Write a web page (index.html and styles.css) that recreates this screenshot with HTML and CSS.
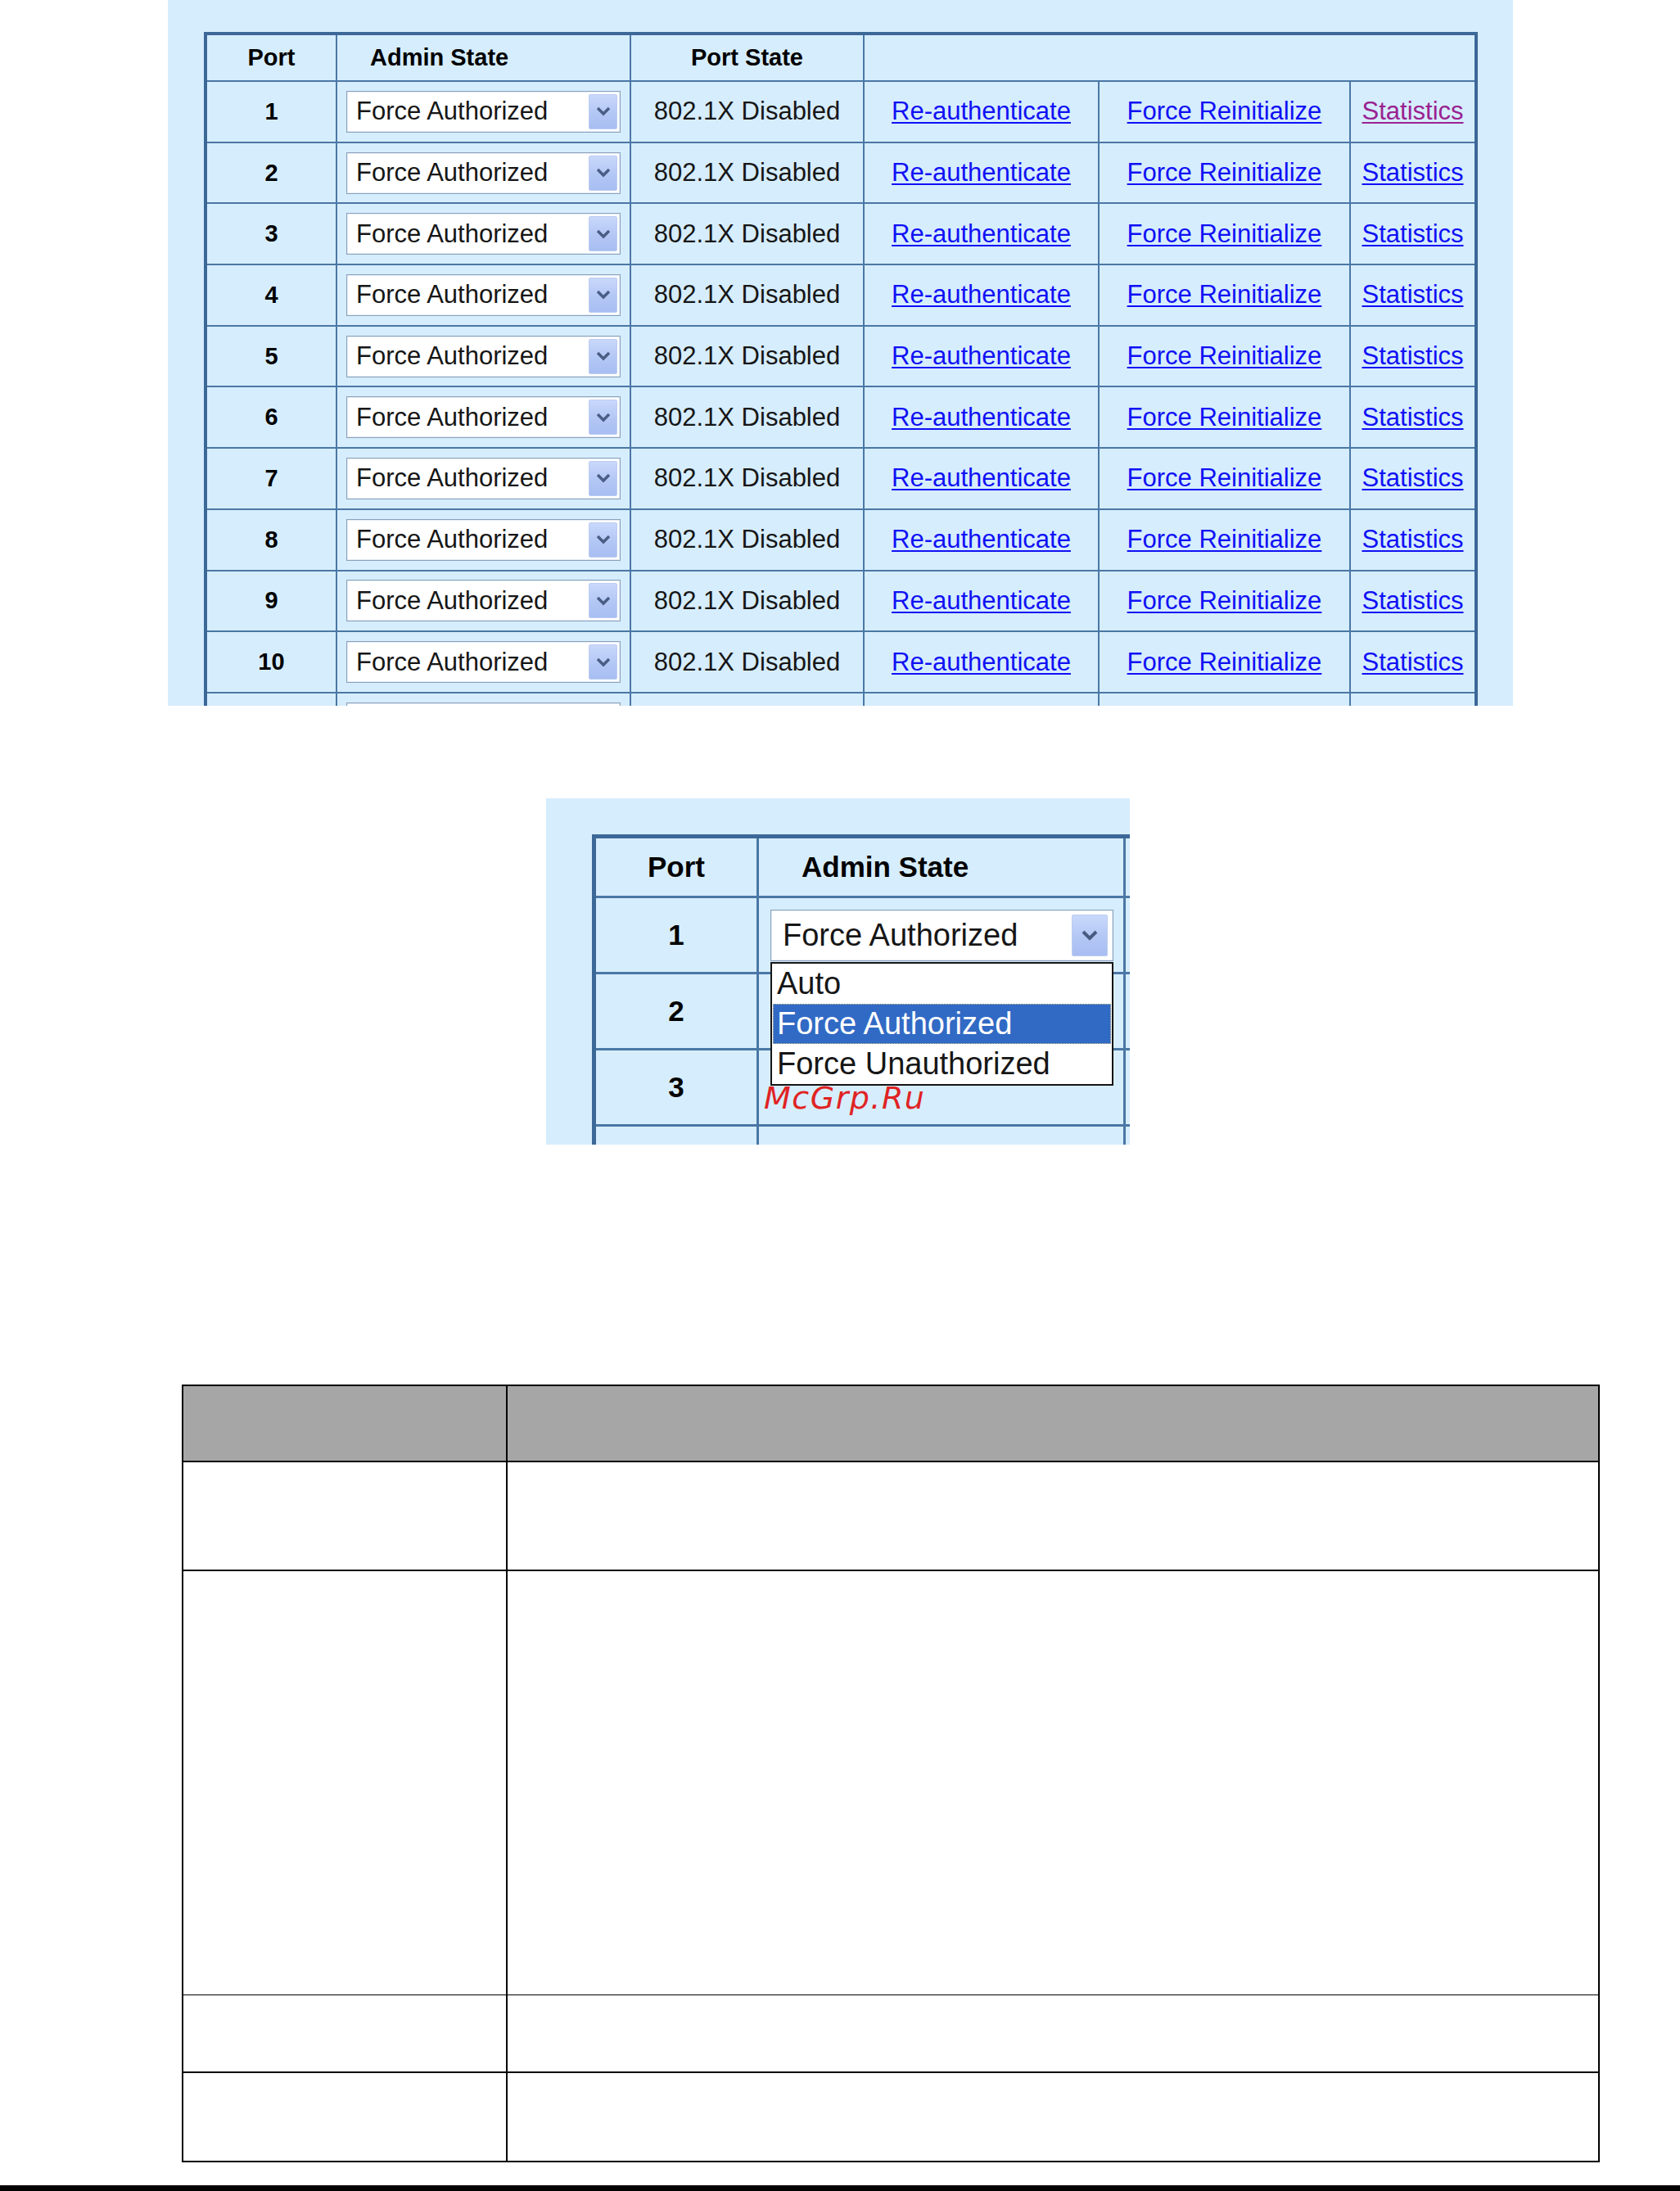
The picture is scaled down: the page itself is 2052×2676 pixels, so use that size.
FILE: index.html
```html
<!DOCTYPE html>
<html>
<head>
<meta charset="utf-8">
<title>802.1X Port Configuration</title>
<link rel="stylesheet" href="styles.css">
</head>
<body>
<div class="page">

  <div class="panel1">
    <div class="t1">
      <div class="c h">Port</div>
      <div class="c h left">Admin State</div>
      <div class="c h">Port State</div>
      <div class="c h span3"></div>

      <div class="c n">1</div>
      <div class="c s"><div class="sel"><span class="sel-text">Force Authorized</span><span class="sel-btn"><svg width="18" height="12" viewBox="0 0 18 12"><path d="M2 2 L9 9 L16 2" fill="none" stroke="#4a5d84" stroke-width="3.4"/></svg></span></div></div>
      <div class="c">802.1X Disabled</div>
      <div class="c"><a href="#">Re-authenticate</a></div>
      <div class="c"><a href="#">Force Reinitialize</a></div>
      <div class="c"><a href="#" class="visited">Statistics</a></div>

      <div class="c n">2</div>
      <div class="c s"><div class="sel"><span class="sel-text">Force Authorized</span><span class="sel-btn"><svg width="18" height="12" viewBox="0 0 18 12"><path d="M2 2 L9 9 L16 2" fill="none" stroke="#4a5d84" stroke-width="3.4"/></svg></span></div></div>
      <div class="c">802.1X Disabled</div>
      <div class="c"><a href="#">Re-authenticate</a></div>
      <div class="c"><a href="#">Force Reinitialize</a></div>
      <div class="c"><a href="#">Statistics</a></div>

      <div class="c n">3</div>
      <div class="c s"><div class="sel"><span class="sel-text">Force Authorized</span><span class="sel-btn"><svg width="18" height="12" viewBox="0 0 18 12"><path d="M2 2 L9 9 L16 2" fill="none" stroke="#4a5d84" stroke-width="3.4"/></svg></span></div></div>
      <div class="c">802.1X Disabled</div>
      <div class="c"><a href="#">Re-authenticate</a></div>
      <div class="c"><a href="#">Force Reinitialize</a></div>
      <div class="c"><a href="#">Statistics</a></div>

      <div class="c n">4</div>
      <div class="c s"><div class="sel"><span class="sel-text">Force Authorized</span><span class="sel-btn"><svg width="18" height="12" viewBox="0 0 18 12"><path d="M2 2 L9 9 L16 2" fill="none" stroke="#4a5d84" stroke-width="3.4"/></svg></span></div></div>
      <div class="c">802.1X Disabled</div>
      <div class="c"><a href="#">Re-authenticate</a></div>
      <div class="c"><a href="#">Force Reinitialize</a></div>
      <div class="c"><a href="#">Statistics</a></div>

      <div class="c n">5</div>
      <div class="c s"><div class="sel"><span class="sel-text">Force Authorized</span><span class="sel-btn"><svg width="18" height="12" viewBox="0 0 18 12"><path d="M2 2 L9 9 L16 2" fill="none" stroke="#4a5d84" stroke-width="3.4"/></svg></span></div></div>
      <div class="c">802.1X Disabled</div>
      <div class="c"><a href="#">Re-authenticate</a></div>
      <div class="c"><a href="#">Force Reinitialize</a></div>
      <div class="c"><a href="#">Statistics</a></div>

      <div class="c n">6</div>
      <div class="c s"><div class="sel"><span class="sel-text">Force Authorized</span><span class="sel-btn"><svg width="18" height="12" viewBox="0 0 18 12"><path d="M2 2 L9 9 L16 2" fill="none" stroke="#4a5d84" stroke-width="3.4"/></svg></span></div></div>
      <div class="c">802.1X Disabled</div>
      <div class="c"><a href="#">Re-authenticate</a></div>
      <div class="c"><a href="#">Force Reinitialize</a></div>
      <div class="c"><a href="#">Statistics</a></div>

      <div class="c n">7</div>
      <div class="c s"><div class="sel"><span class="sel-text">Force Authorized</span><span class="sel-btn"><svg width="18" height="12" viewBox="0 0 18 12"><path d="M2 2 L9 9 L16 2" fill="none" stroke="#4a5d84" stroke-width="3.4"/></svg></span></div></div>
      <div class="c">802.1X Disabled</div>
      <div class="c"><a href="#">Re-authenticate</a></div>
      <div class="c"><a href="#">Force Reinitialize</a></div>
      <div class="c"><a href="#">Statistics</a></div>

      <div class="c n">8</div>
      <div class="c s"><div class="sel"><span class="sel-text">Force Authorized</span><span class="sel-btn"><svg width="18" height="12" viewBox="0 0 18 12"><path d="M2 2 L9 9 L16 2" fill="none" stroke="#4a5d84" stroke-width="3.4"/></svg></span></div></div>
      <div class="c">802.1X Disabled</div>
      <div class="c"><a href="#">Re-authenticate</a></div>
      <div class="c"><a href="#">Force Reinitialize</a></div>
      <div class="c"><a href="#">Statistics</a></div>

      <div class="c n">9</div>
      <div class="c s"><div class="sel"><span class="sel-text">Force Authorized</span><span class="sel-btn"><svg width="18" height="12" viewBox="0 0 18 12"><path d="M2 2 L9 9 L16 2" fill="none" stroke="#4a5d84" stroke-width="3.4"/></svg></span></div></div>
      <div class="c">802.1X Disabled</div>
      <div class="c"><a href="#">Re-authenticate</a></div>
      <div class="c"><a href="#">Force Reinitialize</a></div>
      <div class="c"><a href="#">Statistics</a></div>

      <div class="c n">10</div>
      <div class="c s"><div class="sel"><span class="sel-text">Force Authorized</span><span class="sel-btn"><svg width="18" height="12" viewBox="0 0 18 12"><path d="M2 2 L9 9 L16 2" fill="none" stroke="#4a5d84" stroke-width="3.4"/></svg></span></div></div>
      <div class="c">802.1X Disabled</div>
      <div class="c"><a href="#">Re-authenticate</a></div>
      <div class="c"><a href="#">Force Reinitialize</a></div>
      <div class="c"><a href="#">Statistics</a></div>

      <div class="c n"></div>
      <div class="c s"><div class="sel"><span class="sel-text"></span><span class="sel-btn"></span></div></div>
      <div class="c"></div>
      <div class="c"></div>
      <div class="c"></div>
      <div class="c"></div>
    </div>
  </div>

  <div class="panel2">
    <div class="t2">
      <div class="c h2">Port</div>
      <div class="c h2 left2">Admin State</div>
      <div class="c"></div>

      <div class="c n2">1</div>
      <div class="c s2"><div class="sel sel2"><span class="sel-text">Force Authorized</span><span class="sel-btn btn2"><svg width="22" height="15" viewBox="0 0 22 15"><path d="M3 3 L11 11 L19 3" fill="none" stroke="#475a80" stroke-width="4"/></svg></span></div></div>
      <div class="c"></div>

      <div class="c n2">2</div>
      <div class="c"></div>
      <div class="c"></div>

      <div class="c n2">3</div>
      <div class="c"></div>
      <div class="c"></div>

      <div class="c"></div>
      <div class="c"></div>
      <div class="c"></div>
    </div>

    <div class="dd">
      <div class="dd-item">Auto</div>
      <div class="dd-item on">Force Authorized</div>
      <div class="dd-item">Force Unauthorized</div>
    </div>
    <div class="wm">McGrp.Ru</div>
  </div>

  <div class="spec">
    <div class="spec-row r-head"><div></div><div></div></div>
    <div class="spec-row r1"><div></div><div></div></div>
    <div class="spec-row r2"><div></div><div></div></div>
    <div class="spec-row r3"><div></div><div></div></div>
    <div class="spec-row r4"><div></div><div></div></div>
  </div>

  <div class="bar"></div>
</div>
</body>
</html>
```

FILE: styles.css
```css
html, body {
  margin: 0;
  padding: 0;
  background: #ffffff;
}

body {
  font-family: "Liberation Sans", Arial, sans-serif;
  color: #161616;
}

.page {
  width: 2052px;
  overflow: hidden;
}

/* ---------- first screenshot: port table ---------- */
.panel1 {
  box-sizing: border-box;
  margin-left: 205px;
  width: 1643px;
  height: 862px;
  padding: 39px 0 0 44px;
  background: #d6edfd;
  overflow: hidden;
}

.t1 {
  display: grid;
  width: max-content;
  grid-template-columns: 157px 357px 283px 285px 305px 151px;
  grid-template-rows: 55px;
  grid-auto-rows: 72.7px;
  gap: 2px;
  background: #4a77a5;
  border: 4px solid #3c6898;
  font-size: 31px;
}

.c {
  background: #d6edfd;
  display: flex;
  align-items: center;
  justify-content: center;
  white-space: nowrap;
}

.h {
  font-weight: bold;
  font-size: 29px;
  color: #000;
}

.left {
  justify-content: flex-start;
  padding-left: 40px;
}

.span3 {
  grid-column: span 3;
}

.n {
  font-weight: bold;
  font-size: 29px;
  color: #000;
}

.s {
  justify-content: flex-start;
  padding-left: 11px;
}

.sel {
  box-sizing: border-box;
  width: 335px;
  height: 51px;
  display: flex;
  align-items: stretch;
  padding: 3px;
  background: #ffffff;
  border: 1px solid #8aa1bc;
  box-shadow: inset 0 0 0 1px #e4ecf5;
}

.sel-text {
  flex: 1;
  display: flex;
  align-items: center;
  padding-left: 8px;
  color: #161616;
}

.sel-btn {
  box-sizing: border-box;
  width: 35px;
  display: flex;
  align-items: center;
  justify-content: center;
  background: linear-gradient(#c9d8fb, #b3c7f5 55%, #a8bef2);
  border: 1px solid #bccdf1;
  border-radius: 2px;
}

a {
  color: #1010f5;
  text-decoration: underline;
  text-decoration-thickness: 2px;
  text-underline-offset: 3px;
}

a.visited {
  color: #9a2290;
}

/* ---------- second screenshot: open drop-down ---------- */
.panel2 {
  position: relative;
  box-sizing: border-box;
  margin: 113px 0 0 667px;
  width: 713px;
  height: 423px;
  padding: 44px 0 0 56px;
  background: #d6edfd;
  overflow: hidden;
}

.t2 {
  display: grid;
  width: max-content;
  grid-template-columns: 196px 445px 300px;
  grid-template-rows: 70px;
  grid-auto-rows: 90px;
  gap: 3px;
  background: #4a77a5;
  border: 5px solid #3c6898;
  font-size: 38px;
}

.h2 {
  font-weight: bold;
  font-size: 35px;
  color: #000;
}

.left2 {
  justify-content: flex-start;
  padding-left: 52px;
}

.n2 {
  font-weight: bold;
  font-size: 35px;
  color: #000;
}

.s2 {
  justify-content: flex-start;
  padding-left: 14px;
}

.sel2 {
  width: 419px;
  height: 63px;
  padding: 5px 6px 5px 5px;
}

.sel2 .sel-text {
  padding-left: 9px;
}

.btn2 {
  width: 44px;
}

.dd {
  position: absolute;
  left: 274px;
  top: 200px;
  box-sizing: border-box;
  width: 419px;
  height: 151px;
  background: #ffffff;
  border: 2px solid #151515;
  font-size: 38px;
  color: #161616;
}

.dd-item {
  height: 49px;
  display: flex;
  align-items: center;
  padding-left: 6px;
  white-space: nowrap;
}

.dd-item.on {
  margin: 0 1px;
  padding-left: 5px;
  background: #316ac5;
  color: #ffffff;
  outline: 1px dotted #d8c890;
  outline-offset: -1px;
}

.wm {
  position: absolute;
  left: 266px;
  top: 347px;
  font-family: "DejaVu Sans", Verdana, sans-serif;
  font-style: italic;
  font-size: 38px;
  letter-spacing: 1.5px;
  line-height: 1;
  color: #e02323;
}

/* ---------- parameter description table ---------- */
.spec {
  box-sizing: border-box;
  margin: 293px 0 0 222px;
  width: 1732px;
  border: 2px solid #000;
}

.spec-row {
  display: grid;
  grid-template-columns: 396px 1fr;
}

.spec-row > div:first-child {
  border-right: 2px solid #000;
}

.r-head {
  height: 91px;
  background: #a6a6a6;
  border-bottom: 2px solid #000;
}

.r1 {
  height: 131px;
  border-bottom: 2px solid #000;
}

.r2 {
  height: 517px;
  border-bottom: 1px solid #000;
}

.r3 {
  height: 93px;
  border-bottom: 2px solid #000;
}

.r4 {
  height: 107px;
}

.bar {
  margin-top: 28px;
  height: 7px;
  background: #000;
}
```
